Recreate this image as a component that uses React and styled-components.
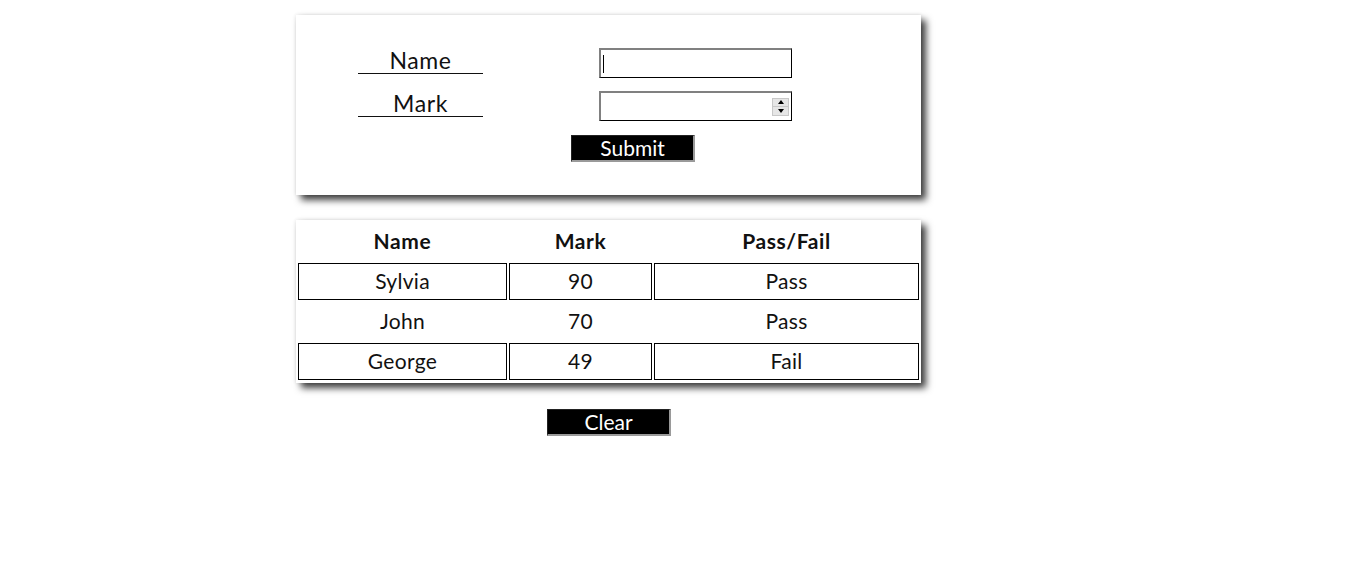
import styled, { createGlobalStyle } from "styled-components"

const Global = createGlobalStyle`
    body {
        margin: 0;
        background: #fff;
        font-family: Lato, "Noto Sans", sans-serif;
        color: #111;
    }
`

const Page = styled.div`
    padding: 15px 0 0 296px;
    width: 625px;
`

const Card = styled.div`
    background: #fff;
    width: 625px;
    box-sizing: border-box;
    box-shadow: 5px 5px 7px rgba(0, 0, 0, 0.75), 0 0 4px rgba(0, 0, 0, 0.12);
`

const FormCard = styled(Card)`
    padding: 33px 0 33px 62px;
    margin-bottom: 25px;
`

const FormGrid = styled.div`
    display: grid;
    grid-template-columns: 125px 193px;
    column-gap: 116px;
    row-gap: 13px;
`

const Label = styled.label`
    align-self: end;
    margin-bottom: 4px;
    text-align: center;
    font-size: 23px;
    line-height: 25px;
    letter-spacing: 0.6px;
    border-bottom: 1px solid #111;
`

const Field = styled.div`
    display: flex;
    align-items: center;
    height: 30px;
    box-sizing: border-box;
    border-style: solid;
    border-width: 2px 1px 1px 2px;
    border-color: #808080 #000 #000 #808080;
    background: #fff;
`

const TextInput = styled.input`
    flex: 1;
    min-width: 0;
    height: 100%;
    border: none;
    outline: none;
    padding: 0 2px;
    font-size: 16px;
    font-family: inherit;
    caret-color: #000;
    background: transparent;
`

const Caret = styled.span`
    width: 1px;
    height: 18px;
    margin-left: 2px;
    background: #000;
`

const Spinner = styled.div`
    display: flex;
    flex-direction: column;
    width: 17px;
    height: 18px;
    margin-right: 2px;
    background: #e6e6e6;
    border: 1px solid #c8c8c8;
    box-sizing: border-box;
`

const Arrow = styled.div`
    flex: 1;
    display: flex;
    align-items: center;
    justify-content: center;
    border-top: ${p => (p.$down ? "1px solid #c8c8c8" : "none")};

    &::before {
        content: "";
        border-left: 3px solid transparent;
        border-right: 3px solid transparent;
        ${p => (p.$down ? "border-top: 4px solid #000;" : "border-bottom: 4px solid #000;")}
    }
`

const Button = styled.button`
    display: block;
    width: 124px;
    height: 27px;
    padding: 0;
    background: #000;
    color: #fff;
    font-family: Lato, "Open Sans", sans-serif;
    font-size: 21px;
    line-height: 24px;
    border-style: solid;
    border-width: 1px 2px 2px 1px;
    border-color: #222 #9a9a9a #9a9a9a #222;
    cursor: pointer;
`

const SubmitButton = styled(Button)`
    margin: 14px 0 0 213px;
`

const ClearButton = styled(Button)`
    margin: 26px 0 0 251px;
`

const TableCard = styled(Card)`
    padding: 0;
`

const Table = styled.table`
    width: 100%;
    border-spacing: 2px 3px;
    text-align: center;
    font-size: 21px;
    letter-spacing: 0.3px;
`

const Th = styled.th`
    height: 35px;
    font-weight: 700;
    letter-spacing: 0.6px;
    padding: 0 0 2px;
`

const Td = styled.td`
    height: 33px;
    padding: 0 0 2px;
    border: 1px solid ${p => (p.$boxed ? "#000" : "transparent")};
`

const rows = [
    { name: "Sylvia", mark: 90, result: "Pass" },
    { name: "John", mark: 70, result: "Pass" },
    { name: "George", mark: 49, result: "Fail" },
]

export default function App() {
    return (
        <Page>
            <Global />
            <FormCard>
                <FormGrid>
                    <Label>Name</Label>
                    <Field>
                        <Caret />
                        <TextInput type="text" />
                    </Field>
                    <Label>Mark</Label>
                    <Field>
                        <TextInput type="text" />
                        <Spinner>
                            <Arrow />
                            <Arrow $down />
                        </Spinner>
                    </Field>
                </FormGrid>
                <SubmitButton>Submit</SubmitButton>
            </FormCard>

            <TableCard>
                <Table>
                    <colgroup>
                        <col style={{ width: "209px" }} />
                        <col style={{ width: "143px" }} />
                        <col />
                    </colgroup>
                    <thead>
                        <tr>
                            <Th>Name</Th>
                            <Th>Mark</Th>
                            <Th>Pass/Fail</Th>
                        </tr>
                    </thead>
                    <tbody>
                        {rows.map((r, i) => (
                            <tr key={r.name}>
                                <Td $boxed={i % 2 === 0}>{r.name}</Td>
                                <Td $boxed={i % 2 === 0}>{r.mark}</Td>
                                <Td $boxed={i % 2 === 0}>{r.result}</Td>
                            </tr>
                        ))}
                    </tbody>
                </Table>
            </TableCard>

            <ClearButton>Clear</ClearButton>
        </Page>
    )
}
